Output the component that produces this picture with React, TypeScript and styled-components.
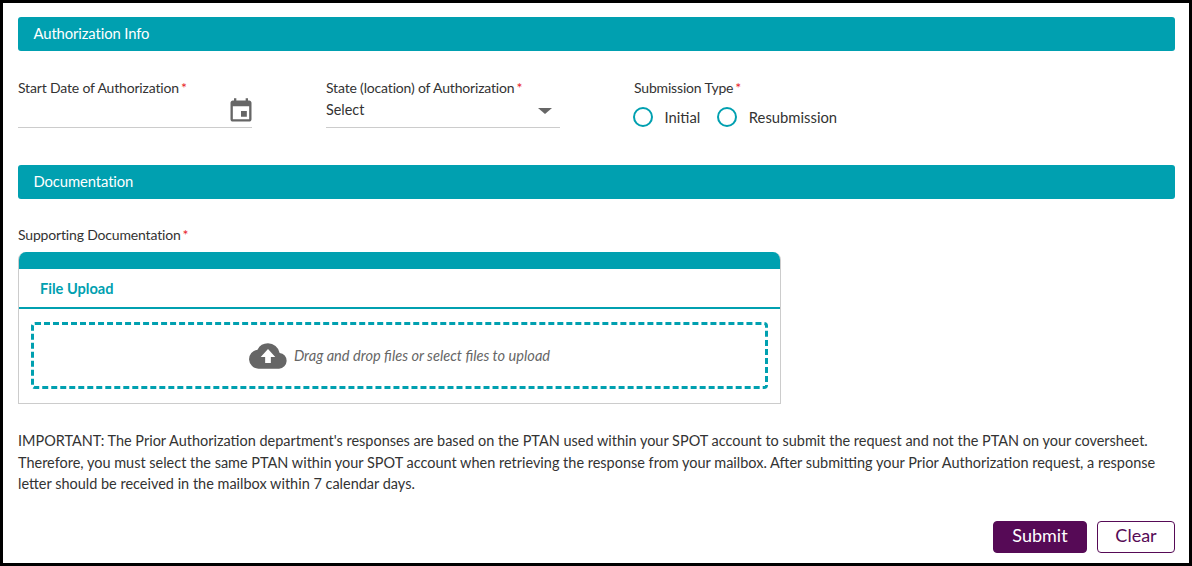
import React from 'react'
import styled, { createGlobalStyle } from 'styled-components'

const GlobalStyle = createGlobalStyle`
  html, body {
    margin: 0;
    padding: 0;
    background: #fff;
  }
  body {
    font-family: Lato, "Liberation Sans", sans-serif;
    color: #333;
  }
`

const Page = styled.div`
  box-sizing: border-box;
  width: 1192px;
  height: 566px;
  border: 3px solid #000;
  padding: 14px 14px 0 15px;
  overflow: hidden;
`

const SectionBar = styled.div`
  height: 34px;
  background: #00a0b0;
  border-radius: 3px;
  color: #fff;
  font-size: 14.8px;
  line-height: 33px;
  padding-left: 15.5px;
  letter-spacing: -0.1px;
`

const FieldRow = styled.div`
  display: flex;
  height: 114px;
  padding-top: 28px;
  box-sizing: border-box;
`

const Field = styled.div`
  width: 234px;
  margin-right: 74px;
`

const Label = styled.div`
  font-size: 14px;
  line-height: 18px;
  color: #333;
  letter-spacing: -0.17px;
`

const Required = styled.span`
  color: #e8232a;
  margin-left: 2px;
`

const DateInput = styled.div`
  height: 21px;
  padding-bottom: 9px;
  border-bottom: 1px solid #ccc;
  position: relative;
`

const CalendarIcon = styled.svg`
  position: absolute;
  right: -3px;
  top: 0;
`

const SelectInput = styled.div`
  height: 21px;
  padding: 2px 0 7px;
  border-bottom: 1px solid #ccc;
  display: flex;
  justify-content: space-between;
  font-size: 14.4px;
  line-height: 21px;
  color: #333;
`

const Caret = styled.span`
  width: 0;
  height: 0;
  margin: 9px 8px 0 0;
  border-left: 7px solid transparent;
  border-right: 7px solid transparent;
  border-top: 6px solid #666;
`

const RadioRow = styled.div`
  display: flex;
  align-items: center;
  margin: 10px 0 0 -1px;
`

const RadioCircle = styled.span`
  box-sizing: border-box;
  width: 20px;
  height: 20px;
  border: 2px solid #00a0b0;
  border-radius: 50%;
  margin-right: 11.5px;
`

const RadioLabel = styled.span`
  font-size: 14.8px;
  line-height: 20px;
  margin-right: 17px;
`

const DocsLabel = styled(Label)`
  margin-top: 27px;
`

const UploadCard = styled.div`
  box-sizing: border-box;
  width: 763px;
  height: 152px;
  margin-top: 8px;
  border: 1px solid #ccc;
  border-top: 0;
  border-radius: 8px 8px 0 0;
  overflow: hidden;
`

const CardTop = styled.div`
  height: 17px;
  margin: 0 -1px;
  background: #00a0b0;
`

const CardTab = styled.div`
  height: 38px;
  border-bottom: 2px solid #00a0b0;
  color: #00a0b0;
  font-size: 14.6px;
  font-weight: 700;
  line-height: 40px;
  padding-left: 21px;
`

const DropZone = styled.div`
  box-sizing: border-box;
  height: 67px;
  margin: 13px 12px 0;
  border: 3px dashed #00a0b0;
  border-radius: 4px;
  display: flex;
  align-items: center;
  justify-content: center;
  gap: 7px;
  color: #666;
  font-size: 14.6px;
  font-style: italic;
  line-height: 24px;
`

const DropText = styled.span`
  padding-top: 1px;
`

const Notice = styled.p`
  margin: 26px 0 0;
  font-size: 14.47px;
  line-height: 21.5px;
  color: #333;
`

const Actions = styled.div`
  display: flex;
  justify-content: flex-end;
  gap: 10px;
  margin-top: 26px;
`

const Button = styled.button<{ $primary?: boolean }>`
  box-sizing: border-box;
  height: 32px;
  width: ${(p) => (p.$primary ? '94px' : '78px')};
  border: 1px solid #560a56;
  border-radius: 4px;
  background: ${(p) => (p.$primary ? '#560a56' : '#fff')};
  color: ${(p) => (p.$primary ? '#fff' : '#560a56')};
  font-family: inherit;
  font-size: 18px;
  line-height: 26px;
  padding: 0 0 4px;
`

const App = () => (
  <Page>
    <GlobalStyle />
    <SectionBar>Authorization Info</SectionBar>
    <FieldRow>
      <Field>
        <Label>Start Date of Authorization<Required>*</Required></Label>
        <DateInput>
          <CalendarIcon width="28" height="28" viewBox="0 0 24 24" fill="#666">
            <path d="M17 12h-5v5h5v-5zM16 1v2H8V1H6v2H5c-1.11 0-1.99.9-1.99 2L3 19c0 1.1.89 2 2 2h14c1.1 0 2-.9 2-2V5c0-1.1-.9-2-2-2h-1V1h-2zm3 18H5V8h14v11z" />
          </CalendarIcon>
        </DateInput>
      </Field>
      <Field>
        <Label>State (location) of Authorization<Required>*</Required></Label>
        <SelectInput>
          Select
          <Caret />
        </SelectInput>
      </Field>
      <Field>
        <Label>Submission Type<Required>*</Required></Label>
        <RadioRow>
          <RadioCircle />
          <RadioLabel>Initial</RadioLabel>
          <RadioCircle />
          <RadioLabel>Resubmission</RadioLabel>
        </RadioRow>
      </Field>
    </FieldRow>
    <SectionBar>Documentation</SectionBar>
    <DocsLabel>Supporting Documentation<Required>*</Required></DocsLabel>
    <UploadCard>
      <CardTop />
      <CardTab>File Upload</CardTab>
      <DropZone>
        <svg width="38" height="26" viewBox="0 0 24 16" fill="#666">
          <path d="M19.35 6.04A7.49 7.49 0 0 0 12 0a7.5 7.5 0 0 0-6.65 4.04A6 6 0 0 0 6 16h13a5 5 0 0 0 .35-9.96z" />
          <path fill="#fff" d="M12 3.6 16.6 8.6H13.8V12.4H10.2V8.6H7.4z" />
        </svg>
        <DropText>Drag and drop files or select files to upload</DropText>
      </DropZone>
    </UploadCard>
    <Notice>
      IMPORTANT: The Prior Authorization department's responses are based on the PTAN used within your SPOT account to submit the request and not the PTAN on your coversheet.
      Therefore, you must select the same PTAN within your SPOT account when retrieving the response from your mailbox. After submitting your Prior Authorization request, a response
      letter should be received in the mailbox within 7 calendar days.
    </Notice>
    <Actions>
      <Button $primary>Submit</Button>
      <Button>Clear</Button>
    </Actions>
  </Page>
)

export default App
